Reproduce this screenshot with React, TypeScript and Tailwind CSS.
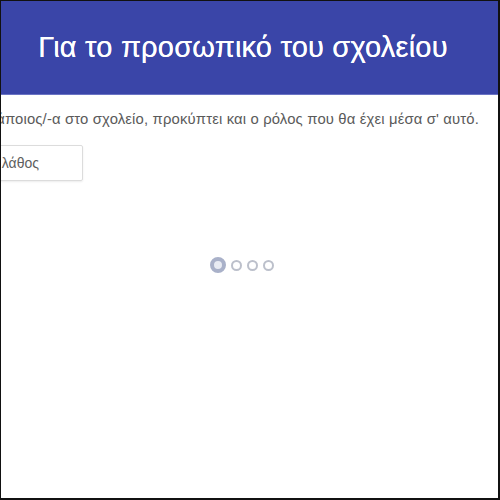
export default function App() {
  return (
    <div
      className="w-[500px] h-[500px] overflow-hidden bg-white border-l border-t border-r-2 border-b-2 border-[#111] flex flex-col"
      style={{ fontFamily: '"Liberation Sans", Arial, sans-serif' }}
    >
      {/* Header */}
      <div className="h-[94px] shrink-0 bg-[#3a45a8] border-b border-[#6a73c4] flex items-center justify-center pr-[13px]">
        <h1 className="text-[29px] leading-none text-white whitespace-nowrap tracking-[0.2px] [text-shadow:0_0_0.6px_#fff]">
          Για το προσωπικό του σχολείου
        </h1>
      </div>

      {/* Intro sentence — overflows on the left */}
      <div className="flex justify-end pr-[19px] pt-[15px] whitespace-nowrap">
        <p className="text-[14.85px] tracking-[0.15px] leading-[18px] text-[#5a5a5a]">
          Ανάλογα με το πώς θα εγγραφεί κάποιος/-α στο σχολείο, προκύπτει και ο ρόλος που θα έχει μέσα σ' αυτό.
        </p>
      </div>

      {/* Select field */}
      <div className="mt-[17px] flex">
        <div className="-ml-[80px] w-[162px] h-[36px] border border-[#dcdcdc] rounded-[2px] shadow-[0_1px_2px_rgba(0,0,0,0.08)] flex items-center justify-end pr-[43px] whitespace-nowrap">
          <span className="text-[14px] text-[#5e5e5e]">Σωστό ή λάθος</span>
        </div>
      </div>

      {/* Loader */}
      <div className="mt-[76px] flex justify-center items-center gap-[5px] pr-[16px]">
        <span className="w-[16px] h-[16px] rounded-full border-[4px] border-[#a9b1c9] bg-[#e8ebf3]" />
        <span className="w-[11px] h-[11px] rounded-full border-2 border-[#bcc0cb]" />
        <span className="w-[11px] h-[11px] rounded-full border-2 border-[#bcc0cb]" />
        <span className="w-[11px] h-[11px] rounded-full border-2 border-[#bcc0cb]" />
      </div>
    </div>
  );
}
